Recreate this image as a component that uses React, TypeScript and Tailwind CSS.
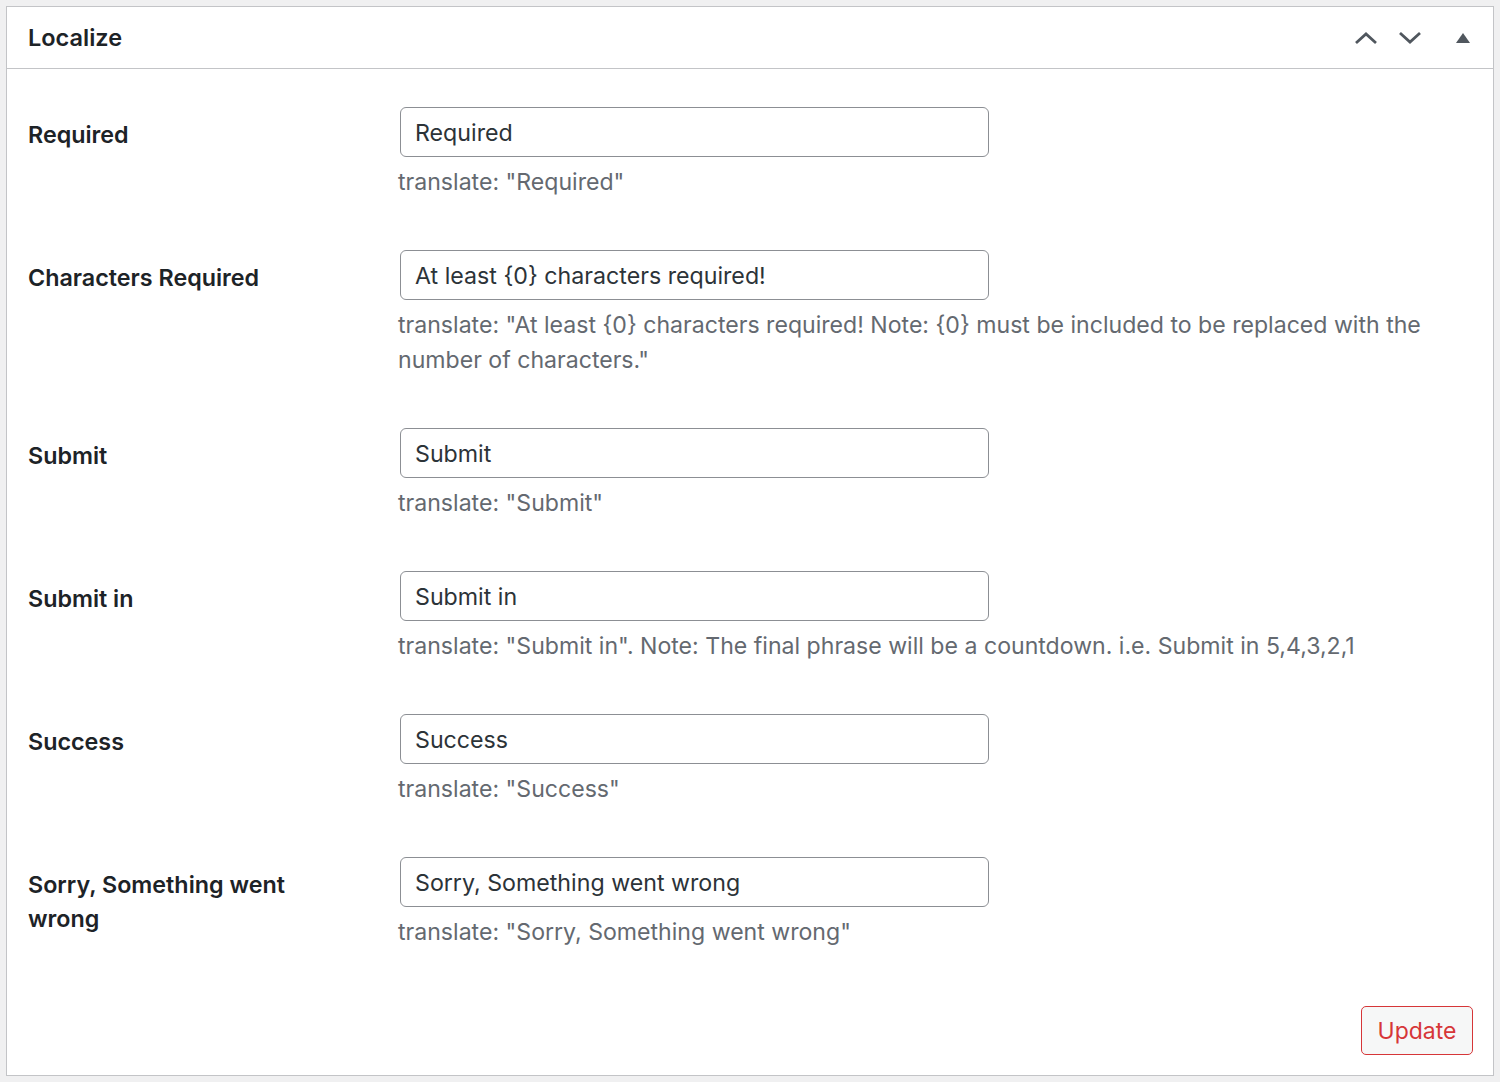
import React from "react";

const rows: { label: string; value: string; desc: string }[] = [
  { label: "Required", value: "Required", desc: 'translate: "Required"' },
  {
    label: "Characters Required",
    value: "At least {0} characters required!",
    desc: 'translate: "At least {0} characters required! Note: {0} must be included to be replaced with the number of characters."',
  },
  { label: "Submit", value: "Submit", desc: 'translate: "Submit"' },
  {
    label: "Submit in",
    value: "Submit in",
    desc: 'translate: "Submit in". Note: The final phrase will be a countdown. i.e. Submit in 5,4,3,2,1',
  },
  { label: "Success", value: "Success", desc: 'translate: "Success"' },
  {
    label: "Sorry, Something went wrong",
    value: "Sorry, Something went wrong",
    desc: 'translate: "Sorry, Something went wrong"',
  },
];

export default function App() {
  return (
    <div
      className="bg-[#f0f0f1] p-[6px] min-h-screen"
      style={{ fontFamily: "Inter, 'Noto Sans', sans-serif" }}
    >
      <div className="bg-white border border-[#c3c4c7]">
        <div className="h-[62px] border-b border-[#c3c4c7] flex items-center pl-[21px] pr-[8px]">
          <h2 className="text-[23.5px] font-semibold text-[#1d2327] flex-1 pt-[1px]">Localize</h2>
          <div className="flex items-center">
            <button className="w-[44px] h-[44px] flex items-center justify-center">
              <svg width="24" height="14" viewBox="0 0 24 14" fill="none">
                <path d="M2 12 L12 3 L22 12" stroke="#50575e" strokeWidth="2.8" />
              </svg>
            </button>
            <button className="w-[44px] h-[44px] flex items-center justify-center">
              <svg width="24" height="14" viewBox="0 0 24 14" fill="none">
                <path d="M2 2 L12 11 L22 2" stroke="#50575e" strokeWidth="2.8" />
              </svg>
            </button>
            <button className="w-[44px] h-[44px] flex items-center justify-center ml-[9px]">
              <svg width="14" height="10" viewBox="0 0 14 10">
                <path d="M7 0 L14 10 L0 10 Z" fill="#50575e" />
              </svg>
            </button>
          </div>
        </div>
        <div className="pl-[21px] pr-[20px] pt-[13px] pb-[20px]">
          {rows.map((r) => (
            <div key={r.label} className="grid grid-cols-[372px_1fr] pt-[25px] pb-[25px]">
              <div className="pt-[11px] pr-[70px] text-[23.3px] leading-[34px] font-semibold text-[#1d2327]">
                {r.label}
              </div>
              <div>
                <div className="w-[589px] h-[50px] border-[1.5px] border-[#8c8f94] rounded-[6px] flex items-center px-[14px] pt-[2px] text-[23.2px] text-[#2c3338]">
                  {r.value}
                </div>
                <p className="mt-[8px] -ml-[2px] text-[23.1px] leading-[35px] text-[#646970] pr-[20px]">{r.desc}</p>
              </div>
            </div>
          ))}
          <div className="flex justify-end pt-[31px]">
            <button className="h-[49px] w-[112px] border-[1.5px] border-[#d63638] rounded-[5px] bg-[#f6f7f7] text-[#d63638] text-[23px] flex items-center justify-center pt-[1px]">
              Update
            </button>
          </div>
        </div>
      </div>
    </div>
  );
}
